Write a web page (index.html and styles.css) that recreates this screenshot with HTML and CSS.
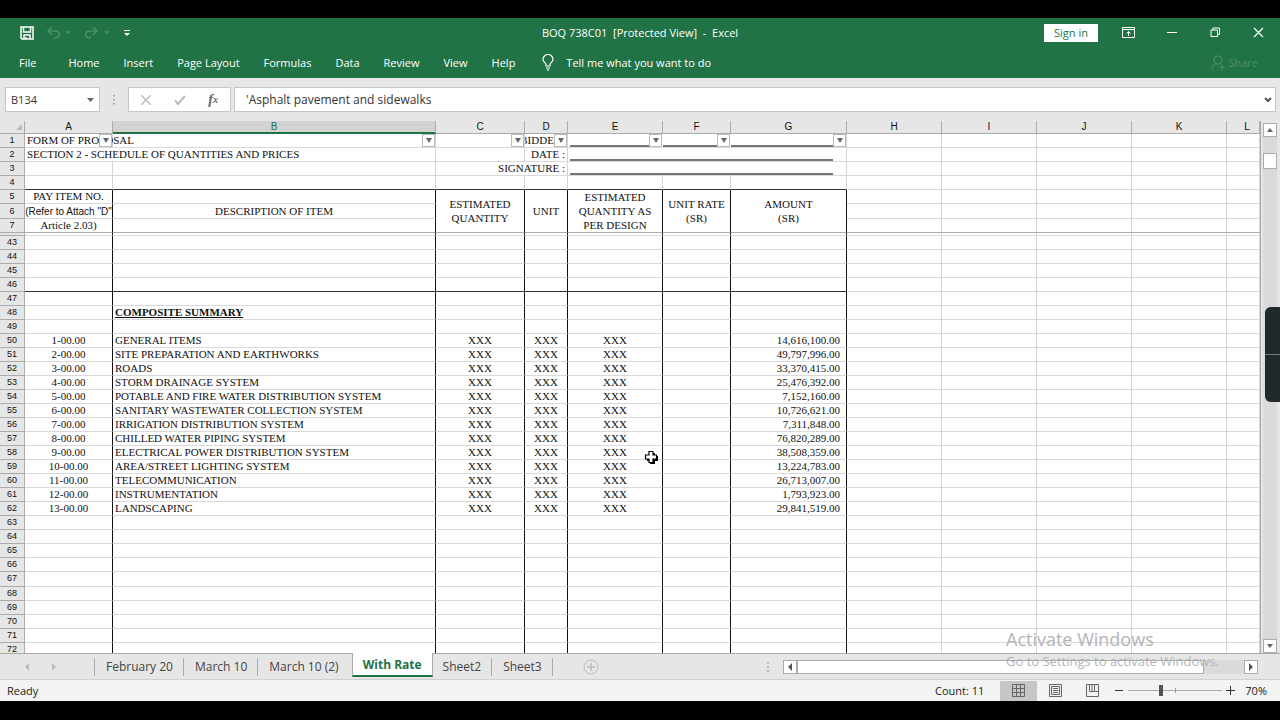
FILE: index.html
```html
<!DOCTYPE html>
<html lang="en">
<head>
<meta charset="utf-8">
<title>BOQ 738C01 [Protected View] - Excel</title>
<link rel="stylesheet" href="styles.css">
</head>
<body>
<header class="ribbon">
  <div class="titlebar">
    <div class="quick">
      <button class="icon-btn" aria-label="Save"><svg width="14" height="14" viewBox="0 0 14 14" fill="none" stroke="#fff" stroke-width="1.500"><path d="M1 1h12v12H2l-1-1zM3.500 1v5h7V1M4 13V9h6v4M6 11v2"/></svg></button>
      <button class="icon-btn dim" aria-label="Undo"><svg width="24" height="14" viewBox="0 0 24 14" fill="none" stroke="currentColor" stroke-width="1.500"><path d="M5 1L1 5l4 4M1 5h7c6 0 6 7-1 7M19 5l2 2 2-2"/></svg></button>
      <button class="icon-btn dim" aria-label="Redo"><svg width="26" height="14" viewBox="0 0 26 14" fill="none" stroke="currentColor" stroke-width="1.500"><path d="M9 1l4 4-4 4M13 5H6c-6 0-6 7 1 7M21 5l2 2 2-2"/></svg></button>
      <button class="icon-btn" aria-label="Customize Quick Access Toolbar"><svg width="8" height="8" viewBox="0 0 8 8"><path d="M1 1h6v1H1zM1 4h6L4 7z" fill="#fff"/></svg></button>
    </div>
    <div class="doc-title">BOQ 738C01&nbsp; [Protected View]&nbsp; -&nbsp; Excel</div>
    <div class="window-tools">
      <button class="signin">Sign in</button>
      <button class="icon-btn" aria-label="Ribbon Display Options"><svg width="13" height="11" viewBox="0 0 13 11" fill="none" stroke="#fff"><path d="M.5.5h12v10H.5zM.5 2.500h12M6.500 9V4.500M4.500 6.500l2-2 2 2"/></svg></button>
      <button class="icon-btn" aria-label="Minimize"><svg width="11" height="11" viewBox="0 0 11 11"><path d="M0 5.500h10" stroke="#fff"/></svg></button>
      <button class="icon-btn" aria-label="Restore"><svg width="11" height="11" viewBox="0 0 11 11" fill="none" stroke="#fff"><path d="M1 3h6.500v6.500H1zM3 3V1h6.500v6.500h-2"/></svg></button>
      <button class="icon-btn" aria-label="Close"><svg width="11" height="11" viewBox="0 0 11 11"><path d="M1 1l9 9M10 1l-9 9" stroke="#fff" stroke-width="1.200"/></svg></button>
    </div>
  </div>
  <nav class="menu">
    <button class="file">File</button><button>Home</button><button>Insert</button><button>Page Layout</button><button>Formulas</button><button>Data</button><button>Review</button><button>View</button><button>Help</button>
    <button class="tell"><svg width="12" height="17" viewBox="0 0 12 17" fill="none" stroke="#fff" stroke-width="1.200"><path d="M4 12V10.500C4 9 1 8 1 5.500a5 5 0 0110 0C11 8 8 9 8 10.500V12zM4 14h4M5 15.800h2"/></svg>Tell me what you want to do</button>
    <button class="share"><svg width="15" height="16" viewBox="0 0 15 16" fill="none" stroke="currentColor" stroke-width="1.200"><circle cx="7" cy="5" r="4"/><path d="M1 15c0-4 2-6 5-6M11 9v6M8 12h6"/></svg>Share</button>
  </nav>
</header>

<section class="formula-bar">
  <div class="name-box"><input aria-label="Name box" value="B134"><button class="icon-btn" aria-label="Name list"><svg width="7" height="4" viewBox="0 0 7 4"><path d="M0 0h7L3.500 4z" fill="#666"/></svg></button></div>
  <svg class="grip" width="2" height="12" viewBox="0 0 2 12"><path d="M1 1v11" stroke="#aaa" stroke-width="2" stroke-dasharray="1.500 2.500"/></svg>
  <div class="fx-tools">
    <button class="icon-btn" aria-label="Cancel"><svg width="10" height="10" viewBox="0 0 10 10"><path d="M0 0l10 10M10 0L0 10" stroke="#bbb" stroke-width="1.500"/></svg></button>
    <button class="icon-btn" aria-label="Enter"><svg width="12" height="10" viewBox="0 0 12 10" fill="none"><path d="M1 5l3 4 7-8" stroke="#bbb" stroke-width="2"/></svg></button>
    <button class="icon-btn fx" aria-label="Insert function">f<sub>x</sub></button>
  </div>
  <div class="formula"><input aria-label="Formula bar" value="'Asphalt pavement and sidewalks"><button class="icon-btn" aria-label="Expand formula bar"><svg width="8" height="6" viewBox="0 0 8 6" fill="none"><path d="M1 1l3 3 3-3" stroke="#555" stroke-width="2"/></svg></button></div>
</section>

<main class="workspace">
  <div class="sheet">
    <table class="grid">
      <colgroup><col class="c-num"><col class="c-a"><col class="c-b"><col class="c-c"><col class="c-d"><col class="c-e"><col class="c-f"><col class="c-g"><col class="c-w"><col class="c-w"><col class="c-w"><col class="c-w"><col></colgroup>
      <thead><tr><th class="corner"><svg width="6" height="6" viewBox="0 0 6 6"><path d="M6 0v6H0z" fill="#bbb"/></svg></th><th>A</th><th class="picked">B</th><th>C</th><th>D</th><th>E</th><th>F</th><th>G</th><th>H</th><th>I</th><th>J</th><th>K</th><th class="last">L</th></tr></thead>
      <tbody id="rows"></tbody>
    </table>
    <svg class="pointer" width="15" height="15" viewBox="0 0 15 15"><path d="M6 3h5v3h3v5h-3v3H6v-3H3V6h3z" fill="#000"/><path d="M5 1.500h4V5h3.500v4H9v3.500H5V9H1.500V5H5z" fill="#fff" stroke="#000" stroke-width="1.200"/></svg>
  </div>
  <div class="vscroll">
    <button class="scroll-btn" aria-label="Scroll up"><svg width="6" height="4" viewBox="0 0 6 4"><path d="M0 4h6L3 0z" fill="#666"/></svg></button>
    <div class="vtrack"><div class="vthumb"></div></div>
    <button class="scroll-btn" aria-label="Scroll down"><svg width="6" height="4" viewBox="0 0 6 4"><path d="M0 0h6L3 4z" fill="#666"/></svg></button>
  </div>
  <div class="side-handle"><span></span><span></span></div>
</main>

<section class="tabs">
  <div class="tab-nav">
    <button class="icon-btn" aria-label="Previous sheets"><svg width="4" height="8" viewBox="0 0 4 8"><path d="M4 0v8L0 4z" fill="#bbb"/></svg></button>
    <button class="icon-btn" aria-label="Next sheets"><svg width="4" height="8" viewBox="0 0 4 8"><path d="M0 0v8l4-4z" fill="#bbb"/></svg></button>
  </div>
  <button class="tab">February 20</button><button class="tab">March 10</button><button class="tab before">March 10 (2)</button><button class="tab active">With Rate</button><button class="tab">Sheet2</button><button class="tab">Sheet3</button>
  <button class="icon-btn add" aria-label="New sheet"><svg width="16" height="16" viewBox="0 0 16 16" fill="none" stroke="#bbb"><circle cx="8" cy="8" r="7"/><path d="M8 4v8M4 8h8" stroke-width="1.500"/></svg></button>
  <svg class="tab-grip" width="2" height="12" viewBox="0 0 2 12"><path d="M1 1v11" stroke="#aaa" stroke-width="2" stroke-dasharray="1.500 2.500"/></svg>
  <div class="hscroll">
    <button class="scroll-btn" aria-label="Scroll left"><svg width="4" height="8" viewBox="0 0 4 8"><path d="M4 0v8L0 4z" fill="#555"/></svg></button>
    <div class="htrack"><div class="hthumb"></div></div>
    <button class="scroll-btn" aria-label="Scroll right"><svg width="4" height="8" viewBox="0 0 4 8"><path d="M0 0v8l4-4z" fill="#555"/></svg></button>
  </div>
</section>

<footer class="status">
  <span class="ready">Ready</span>
  <span class="count">Count: 11</span>
  <button class="view on" aria-label="Normal view"><svg width="13" height="13" viewBox="0 0 13 13" fill="none" stroke="#666"><path d="M.5.5h12v12H.5zM4.500.5v12M8.500.5v12M.5 4.500h12M.5 8.500h12"/></svg></button>
  <button class="view" aria-label="Page layout view"><svg width="13" height="13" viewBox="0 0 13 13" fill="none" stroke="#666"><path d="M.5.5h12v12H.5zM2.500 2.500h8v8h-8zM4 4.500h5M4 6.500h5M4 8.500h5"/></svg></button>
  <button class="view" aria-label="Page break preview"><svg width="13" height="13" viewBox="0 0 13 13" fill="none" stroke="#666"><path d="M.5.5h12v12H.5zM3.500.5v7h5v-7M6 .5v7M8.500 7.500h4"/></svg></button>
  <button class="zoom-btn" aria-label="Zoom out"><svg width="9" height="9" viewBox="0 0 9 9"><path d="M0 4.500h8" stroke="#333"/></svg></button>
  <input class="zoom" type="range" min="10" max="180" value="68" aria-label="Zoom">
  <button class="zoom-btn" aria-label="Zoom in"><svg width="9" height="9" viewBox="0 0 9 9"><path d="M0 4.500h9M4.500 0v9" stroke="#333"/></svg></button>
  <span class="percent">70%</span>
</footer>

<div class="activate"><p class="act-big">Activate Windows</p><p class="act-small">Go to Settings to activate Windows.</p></div>
<script src="sheet.js"></script>
</body>
</html>
```
FILE: styles.css
```css
* { box-sizing: border-box; }
body {
  margin: 0;
  height: 100vh;
  padding: 18px 0 19px;
  background: #000;
  display: flex;
  flex-direction: column;
  font-family: "Open Sans", "Noto Sans", sans-serif;
  font-size: 11px;
  color: #333;
  overflow: hidden;
}
button, input { font: inherit; color: inherit; border: 0; background: none; padding: 0; margin: 0; }
svg { display: block; flex: none; }
.icon-btn, .scroll-btn, .view, .zoom-btn { display: flex; align-items: center; justify-content: center; }

.ribbon { background: #217346; color: #fff; flex: none; }
.titlebar { height: 29px; display: grid; grid-template-columns: 1fr auto 1fr; align-items: center; }
.quick { display: flex; align-items: center; gap: 13px; padding-left: 20px; }
.dim, .share { color: #4a8f69; }
.doc-title { white-space: nowrap; }
.window-tools { display: flex; align-items: center; justify-content: flex-end; gap: 32px; padding-right: 16px; }
.signin { width: 54px; height: 18px; background: #fff; color: #217346; margin-right: -8px; }
.menu { height: 31px; display: flex; align-items: center; padding-left: 7px; }
.menu button { padding: 0 12px; white-space: nowrap; }
.menu .file { padding-right: 20px; }
.menu .tell { display: flex; align-items: center; gap: 12px; padding-left: 15px; }
.menu .share { display: flex; align-items: center; gap: 2px; margin-left: auto; padding-right: 22px; }

.formula-bar { flex: none; height: 43px; background: #e6e6e6; display: flex; align-items: center; padding: 0 4px 0 5px; }
.name-box, .fx-tools, .formula { height: 25px; background: #fff; border: 1px solid #c6c6c6; display: flex; align-items: center; }
.name-box { width: 95px; padding: 0 5px; }
.name-box input { flex: 1; min-width: 0; }
.grip { margin: 0 13px; }
.fx-tools { width: 103px; justify-content: space-between; padding: 0 12px; margin-right: 3px; }
.fx { font-family: "Liberation Serif", serif; font-style: italic; font-weight: bold; font-size: 14px; color: #666; }
.fx sub { font-size: 10px; }
.formula { flex: 1; padding: 0 3px 0 11px; font-size: 12px; }
.formula input { flex: 1; }

.workspace { flex: 1; min-height: 0; display: flex; background: #e6e6e6; position: relative; }
.sheet { flex: 1; min-width: 0; overflow: hidden; position: relative; border-right: 1px solid #ababab; }
.grid { width: 100%; height: calc(100% + 4px); table-layout: fixed; border-collapse: separate; border-spacing: 0; background: #fff; font-family: "Liberation Serif", serif; font-size: 11px; line-height: 13px; color: #111; }
.c-num { width: 25px; } .c-a { width: 88px; } .c-b { width: 323px; } .c-c { width: 89px; } .c-d { width: 43px; }
.c-e { width: 95px; } .c-f { width: 68px; } .c-g { width: 116px; } .c-w { width: 95px; }
.grid th, .grid td { padding: 0 2px; border-right: 1px solid #d4d4d4; border-bottom: 1px solid #d9d9d9; white-space: nowrap; height: 14px; text-align: center; font-weight: normal; position: relative; }
.grid th { background: #e6e6e6; border-color: #ababab; font-family: "Liberation Sans", sans-serif; font-size: 9px; }
.grid thead th { height: 13px; line-height: 12px; font-size: 10px; }
.grid thead .picked { background: #d2d2d2; color: #217346; border-bottom: 2px solid #217346; line-height: 11px; }
.grid thead .last { padding-left: 10px; }
.corner svg { margin-left: auto; }
.grid .left { text-align: left; }
.grid .right { text-align: right; }
.grid .amount { text-align: right; padding-right: 6px; }
.grid .heavy { border-right-color: #111; }
.grid .head { border-right-color: #111; line-height: 14px; border-bottom-color: #ababab; }
.grid .sans { font-family: "Liberation Sans", sans-serif; font-size: 10px; padding: 0; }
.grid .clip { padding: 0; }
.clip div { display: flex; justify-content: flex-end; overflow: hidden; }
.grid .flush { border-right-color: transparent; }
.grid .joined { padding-left: 0; padding-right: 0; }
.grid .ruled { border-bottom-color: #333; }
.grid .split th, .grid .split td { height: 3px; line-height: 2px; }
.grid .frozen > * { border-bottom-color: #ababab; }
.composite { font-weight: bold; text-decoration: underline; }
.sign { height: 12px; margin: 0 11px 0 0; border-bottom: 2px solid #777; }
.sign.full { margin: 0; }
.filter { position: absolute; right: 0; bottom: 0; width: 13px; height: 13px; background: #fff; border: 1px solid #bbb; display: flex; align-items: center; justify-content: center; z-index: 1; }
.pointer { position: absolute; left: 644px; top: 329px; }

.vscroll { width: 19px; padding: 2px 3px 0 2px; display: flex; flex-direction: column; }
.scroll-btn { width: 14px; height: 14px; background: #fff; border: 1px solid #ababab; flex: none; }
.vtrack { flex: 1; background: #dadada; padding-top: 16px; }
.vthumb { height: 16px; background: #fff; border: 1px solid #ababab; width: 14px; }
.side-handle { position: absolute; right: 0; top: 186px; width: 15px; display: flex; flex-direction: column; gap: 1px; background: #777; border-radius: 6px 0 0 6px; overflow: hidden; }
.side-handle span { height: 47px; background: #202a2d; }

.tabs { flex: none; height: 27px; background: #e6e6e6; border-top: 1px solid #ababab; border-bottom: 1px solid #d0d0d0; display: flex; align-items: center; font-size: 12px; }
.tab-nav { width: 94px; padding-left: 25px; display: flex; gap: 23px; align-self: stretch; align-items: center; }
.tab { padding: 0 10px 0 11px; height: 18px; line-height: 17px; border-right: 1px solid #ababab; white-space: nowrap; color: #444; }
.tab:nth-of-type(1) { border-left: 1px solid #ababab; }
.tab.before { border-right: 0; padding-right: 13px; }
.tab.active { align-self: flex-start; height: 24px; margin-top: -1px; line-height: 24px; padding: 0 10px; background: #fff; color: #217346; font-weight: bold; border-right: 1px solid #ababab; border-left: 1px solid #ababab; border-bottom: 2px solid #217346; }
.tab.active + .tab { padding-left: 10px; }
.add { margin-left: 30px; }
.tab-grip { margin: 0 14px 0 auto; }
.hscroll { width: 475px; display: flex; margin-right: 22px; }
.htrack { flex: 1; background: #dadada; }
.hthumb { width: 91%; height: 14px; background: #fff; border: 1px solid #ababab; }

.status { flex: none; height: 21px; background: #f3f3f3; display: flex; align-items: center; padding: 0 13px 0 7px; color: #222; }
.count { margin: 0 16px 0 auto; }
.view { width: 37px; height: 20px; }
.view.on { background: #c6c6c6; }
.zoom-btn { width: 9px; height: 20px; margin: 0 4px; }
.zoom { appearance: none; width: 94px; height: 12px; background: linear-gradient(#999, #999) 50% 50% / 1px 5px no-repeat, linear-gradient(#aaa, #aaa) 50% 50% / 100% 1px no-repeat; }
.zoom::-webkit-slider-thumb { appearance: none; width: 4px; height: 11px; background: #555; }
.percent { margin-left: 6px; }

.activate { position: absolute; right: 54px; bottom: 50px; width: 220px; color: #b4b4b4; pointer-events: none; }
.activate p { margin: 0; white-space: nowrap; }
.act-big { font-size: 18px; line-height: 25px; }
.act-small { font-size: 13px; line-height: 18px; }
```
FILE: sheet.js
```javascript
const items = [
  ["GENERAL ITEMS", "14,616,100.00"],
  ["SITE PREPARATION AND EARTHWORKS", "49,797,996.00"],
  ["ROADS", "33,370,415.00"],
  ["STORM DRAINAGE SYSTEM", "25,476,392.00"],
  ["POTABLE AND FIRE WATER DISTRIBUTION SYSTEM", "7,152,160.00"],
  ["SANITARY WASTEWATER COLLECTION SYSTEM", "10,726,621.00"],
  ["IRRIGATION DISTRIBUTION SYSTEM", "7,311,848.00"],
  ["CHILLED WATER PIPING SYSTEM", "76,820,289.00"],
  ["ELECTRICAL POWER DISTRIBUTION SYSTEM", "38,508,359.00"],
  ["AREA/STREET LIGHTING SYSTEM", "13,224,783.00"],
  ["TELECOMMUNICATION", "26,713,007.00"],
  ["INSTRUMENTATION", "1,793,923.00"],
  ["LANDSCAPING", "29,841,519.00"]
];

const td = (text = "", cls = "", attrs = "") => `<td class="${cls}" ${attrs}>${text}</td>`;
const blank = (n, cls = "") => td("", cls).repeat(n);
const row = (n, cells, cls = "") => `<tr class="${cls}"><th>${n}</th>${cells}${blank(5)}</tr>`;
const filter = '<button class="filter" aria-label="Filter"><svg width="6" height="5" viewBox="0 0 6 5"><path d="M0 0h6L3 5z" fill="#666"/></svg></button>';
const sign = '<div class="sign"></div>';
const signFull = '<div class="sign full"></div>' + filter;

let html = "";
html += row(1, td("FORM OF PROPOSAL" + filter, "left") + td(filter) + td(filter) +
  td("<div>BIDDER :</div>" + filter, "clip") + td(signFull, "flush") + td(signFull, "flush joined") + td(signFull, "joined"));
html += row(2, td("SECTION 2 - SCHEDULE OF QUANTITIES AND PRICES", "left", 'colspan="2"') + td() +
  td("DATE :", "right") + td(sign, "", 'colspan="3"'));
html += row(3, blank(2) + td("SIGNATURE :", "right", 'colspan="2"') + td(sign, "", 'colspan="3"'));
html += row(4, blank(7, "ruled"));
html += row(5, td("PAY ITEM NO.", "heavy") + td("", "heavy") +
  ["ESTIMATED<br>QUANTITY", "UNIT", "ESTIMATED<br>QUANTITY AS<br>PER DESIGN", "UNIT RATE<br>(SR)", "AMOUNT<br>(SR)"]
    .map(t => td(t, "head", 'rowspan="3"')).join(""));
html += row(6, td('(Refer to Attach "D"', "heavy sans") + td("DESCRIPTION OF ITEM", "heavy"));
html += row(7, td("Article 2.03)", "heavy") + td("", "heavy"), "frozen");
html += row("", blank(7, "heavy"), "split");

for (let n = 43; n <= 72; n++) {
  const item = items[n - 50];
  if (item) {
    html += row(n, td(`${n - 49}-00.00`, "heavy") + td(item[0], "heavy left") +
      td("XXX", "heavy").repeat(3) + td("", "heavy") + td(item[1], "heavy amount"));
  } else if (n === 48) {
    html += row(n, td("", "heavy") + td('<span class="composite">COMPOSITE SUMMARY</span>', "heavy left") + blank(5, "heavy"));
  } else {
    html += row(n, blank(7, n === 46 ? "heavy ruled" : "heavy"));
  }
}
document.getElementById("rows").innerHTML = html;
```
